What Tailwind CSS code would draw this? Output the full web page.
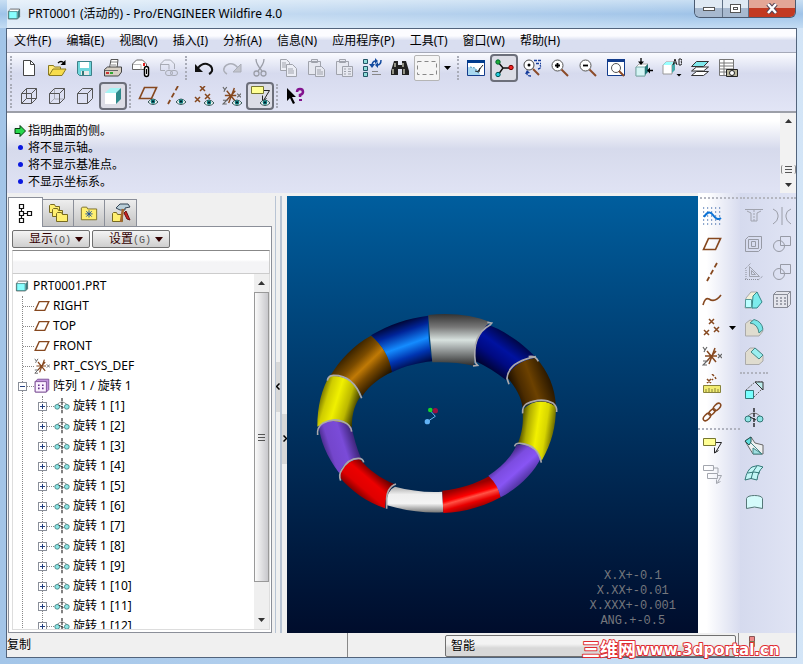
<!DOCTYPE html>
<html lang="zh-CN">
<head>
<meta charset="utf-8">
<title>PRT0001 (活动的) - Pro/ENGINEER Wildfire 4.0</title>
<script src="https://cdn.jsdelivr.net/npm/@tailwindcss/browser@4"></script>
</head>
<body class="flex h-screen flex-col overflow-hidden bg-linear-to-r from-[#a3c5e8] via-[#b9d4f0] to-[#d3e5f7] font-['Noto_Sans','Noto_Sans_CJK_SC',sans-serif] text-xs text-black">

<svg class="hidden" aria-hidden="true">
  <defs>
    <symbol id="cube" viewBox="0 0 20 20"><path d="M2 6 5 3H18V14L15 17H2z" fill="#fff" stroke="#333"/><path d="M2.500 6.500h12v10h-12z" fill="#8ff" stroke="#377"/><path d="M15 6.500 18 3.500V14l-3 3z" fill="#387c80"/></symbol>
    <symbol id="new" viewBox="0 0 20 20"><path d="M4.500 2.500h7l4 4v11h-11z" fill="#fff" stroke="#444"/><path d="M11.500 2.500v4h4" fill="none" stroke="#444"/></symbol>
    <symbol id="open" viewBox="0 0 20 20"><path d="M1.500 17V7.500h5l1 1.500h6v3" fill="#ffe97a" stroke="#8a7a20"/><path d="M2 17.500 6 11h13l-4 6.500z" fill="#f7dc4c" stroke="#8a7a20"/><path d="M11 5q3-3 6 0" fill="none" stroke="#000" stroke-width="1.300"/><path d="M18.500 2v5h-5z"/></symbol>
    <symbol id="save" viewBox="0 0 20 20"><path d="M2.500 3.500h14v14h-12l-2-2z" fill="#6fd6dc" stroke="#3c8088"/><path d="M5 4h9v6H5z" fill="#fff"/><path d="M6 13h8v4H6z" fill="#e8e8e8"/><path d="M7 13h2v4H7z" fill="#377"/></symbol>
    <symbol id="print" viewBox="0 0 20 20"><path d="M6.500 10 8 1.500h7L14 10" fill="#fff" stroke="#555"/><path d="M8 4h6M8 7h5" stroke="#888"/><path d="M1.500 11.500l3-2.500h14v5l-3 4h-14z" fill="#d8d0c4" stroke="#444"/><path d="M2 12.500h13" stroke="#666"/><path d="M3 14h3v2H3z" fill="#c33"/><path d="M7 14h3v2H7z" fill="#3a3"/></symbol>
    <symbol id="mail" viewBox="0 0 20 20"><path d="M1.500 11.500V6l4-4h6l4 4v5.500z" fill="#fff" stroke="#666"/><path d="M2 6.500h8v5" fill="none" stroke="#bbb"/><path d="M12 5h2v3h-2z" fill="#d22"/><path d="M13.500 10.500q0-2 2-2t2 2v6q0 2-2 2t-2-2z" fill="#fff" stroke="#000" stroke-width="1.500"/><path d="M15.500 11v5" stroke="#000"/></symbol>
    <symbol id="link" viewBox="0 0 20 20"><g fill="none" stroke="#a8abb5"><path d="M6 12.500H1.500V6l4-4h6l4 4v5"/><path d="M2 6.500h8v5"/><rect x="6.500" y="12.500" width="7" height="5" rx="2.500"/><rect x="11.500" y="12.500" width="7" height="5" rx="2.500"/></g></symbol>
    <symbol id="undo" viewBox="0 0 20 20"><path d="M4 10q4-5 9-4 6 2 5 7-1 2-3 3" fill="none" stroke="#111" stroke-width="2"/><path d="M1 6v8h8z" fill="#111"/></symbol>
    <symbol id="redo" viewBox="0 0 20 20"><path d="M16 10Q12 5 7 6q-6 2-5 7 1 2 3 3" fill="none" stroke="#abaeb8" stroke-width="1.500"/><path d="M19 6v8h-8z" fill="#c2c4cc" stroke="#abaeb8"/></symbol>
    <symbol id="cut" viewBox="0 0 20 20"><g fill="none" stroke="#9b9ea8" stroke-width="1.300"><path d="M6 1q0 5 6 12M14 1q0 5-6 12"/><circle cx="6.500" cy="15.500" r="2.500"/><circle cx="13.500" cy="15.500" r="2.500"/></g></symbol>
    <symbol id="copy" viewBox="0 0 20 20"><g fill="#eceef6" stroke="#a0a3ac"><path d="M2.500 1.500h6l3 3v8h-9z"/><path d="M8.500 6.500h6l4 4v8h-10z"/><path d="M4 5h4M4 7h4M4 9h4M10 11h5M10 13h6M10 15h6"/></g></symbol>
    <symbol id="paste" viewBox="0 0 20 20"><g fill="#e6e8f0" stroke="#a0a3ac"><path d="M2.500 3.500h12v13h-12zM5.500 1.500h6v3h-6z"/><path d="M9.500 8.500h6l3 3v7h-9zM11 12h4M11 14h6M11 16h6"/></g></symbol>
    <symbol id="pastes" viewBox="0 0 20 20"><g fill="#e6e8f0" stroke="#a0a3ac"><path d="M2.500 3.500h12v13h-12zM5.500 1.500h6v3h-6z"/><path d="M8.500 8.500h10v10h-10zM10 11h2M14 11h3M10 13.500h2M14 13.500h3M10 16h2M14 16h3"/></g></symbol>
    <symbol id="regen" viewBox="0 0 20 20"><g fill="#8fdcd8" stroke="#256"><path d="M1.500 1.500h4v4h-4zM1.500 8.500h4v4h-4zM1.500 14.500h4v4h-4z"/></g><path d="M10 13.500h6M10 16.500h9" stroke="#888"/><path d="M10 8q0-5 4-5M19 2q0 5-4 5" fill="none" stroke="#124a9e" stroke-width="1.500"/><path d="m13 0 3 3-3 3zM16 4l-3 3 3 3zM7 6l3 4 3-4z" fill="#124a9e"/></symbol>
    <symbol id="find" viewBox="0 0 20 20"><path d="M4 3h4v4h4V3h4l3 10v4h-7v-6H8v6H1v-4z" fill="#222"/><path d="M5 5v4M13 5v4M3 11v5M14 11v5" stroke="#b9b9a8" stroke-width="1.500"/></symbol>
    <symbol id="box" viewBox="0 0 22 20"><path d="M1.500 3.500h19v13h-19z" fill="none" stroke="#888" stroke-dasharray="4 3"/></symbol>
    <symbol id="redraw" viewBox="0 0 20 20"><path d="M1.500 2.500h17v15h-17z" fill="#fff" stroke="#123c8c"/><path d="M1 2h18v3H1z" fill="#003b8e"/><path d="M2 17V9l6 1 5 3 1 4z" fill="#a8d8f0"/><path d="m4 9 5 1 4 6" fill="none" stroke="#4a9ac0" stroke-dasharray="2 1"/><path d="m9 13 4 1 1-4M12 13l5-6" fill="none" stroke="#222"/></symbol>
    <symbol id="spin" viewBox="0 0 20 20"><path d="m4 4 5 6h9M9 10l-5 7" fill="none" stroke="#111" stroke-width="1.400"/><circle cx="4" cy="4" r="2.200" fill="#1fae35" stroke="#063"/><circle cx="17" cy="9.500" r="2.200" fill="#e22" stroke="#700"/><circle cx="4" cy="16.500" r="2.200" fill="#2cd" stroke="#055"/></symbol>
    <symbol id="orient" viewBox="0 0 20 20"><circle cx="7" cy="7" r="5" fill="#fff" stroke="#444"/><circle cx="7" cy="7" r="1.500"/><path d="m11 11 6 6" stroke="#8b4a28" stroke-width="2"/><path d="M12 2.500h7M14 5.500h5M5 14q-1 4 4 4M16 11q4-1 2-4" fill="none" stroke="#12399a" stroke-width="1.300" stroke-dasharray="3 1"/><path d="m3 16 2-4 3 3z" fill="#12399a"/></symbol>
    <symbol id="zin" viewBox="0 0 20 20"><circle cx="7.500" cy="7.500" r="5.500" fill="#fff" stroke="#555"/><path d="M5 7.500h5M7.500 5v5" stroke="#000" stroke-width="1.800"/><path d="m11.500 11.500 6.500 6.500" stroke="#8b4a28" stroke-width="2"/></symbol>
    <symbol id="zout" viewBox="0 0 20 20"><circle cx="7.500" cy="7.500" r="5.500" fill="#fff" stroke="#555"/><path d="M5 7.500h5" stroke="#000" stroke-width="1.800"/><path d="m11.500 11.500 6.500 6.500" stroke="#8b4a28" stroke-width="2"/></symbol>
    <symbol id="refit" viewBox="0 0 20 20"><path d="M1.500 1.500h17v16h-17z" fill="#fff" stroke="#123c8c"/><path d="M1 1h18v3H1z" fill="#123c8c"/><circle cx="10" cy="10" r="4.500" fill="#fff" stroke="#555"/><path d="m13 13 5 5" stroke="#8b4a28" stroke-width="2"/></symbol>
    <symbol id="reor" viewBox="0 0 20 20"><path d="m2 9 3-3h9l-3 3v9H2z" fill="#fff" stroke="#aaa"/><path d="M2 9h9v9H2z" fill="#d5f4f4" stroke="#7aa"/><path d="m11 9 3-3v8l-3 3z" fill="#277"/><path d="M7 0v4M19 12.500h-4" stroke="#000" stroke-width="1.300"/><path d="M4 3.500h6L7 7zM16 9.500v6l-3-3z"/></symbol>
    <symbol id="views" viewBox="0 0 20 20"><path d="m1 7 3-3h8l-2 3v9H1z" fill="#fff" stroke="#999"/><path d="m1 7 3-3h8L9 7z" fill="#9ff"/><path d="m10 7 3-3v8l-3 3z" fill="#4aa"/><path d="m11 7 2-6 2 6M12 5h2M17 7V1h2q2 1 0 3 2 1 0 3z" fill="none" stroke="#222"/><path d="M14.500 16h5L17 18.500z"/></symbol>
    <symbol id="layers" viewBox="0 0 20 20"><g fill="#fff" stroke="#333"><path d="m1.500 17.500 5-4h12l-5 4z"/><path d="m1.500 13 5-4h12l-5 4z"/><path d="m1.500 8.500 5-5h12l-5 5z" fill="#7fe8ec"/></g></symbol>
    <symbol id="vmgr" viewBox="0 0 20 20"><path d="M1.500 1.500h14v16h-14zM1 5h14M1 8h14M1 11h14M1 14h14M6 2v15" fill="#fff" stroke="#777"/><path d="M8.500 11.500h11v7h-11z" fill="#b9b69c" stroke="#222"/><circle cx="14" cy="15" r="2.500" fill="#fff" stroke="#222"/></symbol>
    <symbol id="w1" viewBox="0 0 20 20"><path d="M2.500 7.500h10v10h-10zM7.500 2.500h10v10h-10zM2.500 7.500l5-5M12.500 7.500l5-5M2.500 17.500l5-5M12.500 17.500l5-5" fill="none" stroke="#555"/></symbol>
    <symbol id="w2" viewBox="0 0 20 20"><path d="M7.500 3v10h10M2.500 17.500l5-5" fill="none" stroke="#a6a9b4"/><path d="M2.500 7.500h10v10h-10zl5-5h10v10l-5 5M12.500 7.500l5-5" fill="none" stroke="#555"/></symbol>
    <symbol id="w3" viewBox="0 0 20 20"><path d="M2.500 7.500h10v10h-10zl5-5h10v10l-5 5M12.500 7.500l5-5" fill="none" stroke="#555"/></symbol>
    <symbol id="w4" viewBox="0 0 20 20"><path d="m2 7 5-5h11l-5 5z" fill="#a5f4f4"/><path d="m13 7 5-5v11l-5 5z" fill="#2d8a8a"/><path d="M2 7h11v11H2z" fill="#fff"/></symbol>
    <symbol id="eye" viewBox="0 0 10 7"><path d="M0 4q5-6 10 0-5 5-10 0z" fill="#fff" stroke="#355"/><circle cx="5" cy="3.500" r="2.300" fill="#0b7d7d"/><circle cx="5" cy="3.500" r="1" fill="#012"/></symbol>
    <symbol id="plane" viewBox="0 0 20 20"><path d="M1.500 15.500 6.500 4.500h12l-5 11z" fill="none" stroke="#86481f" stroke-width="1.700"/></symbol>
    <symbol id="axis" viewBox="0 0 20 20"><path d="M15 1 5 19" fill="none" stroke="#86481f" stroke-width="1.800" stroke-dasharray="5 3"/></symbol>
    <symbol id="pts" viewBox="0 0 20 20"><path d="m7 1 5 5m0-5L7 6M2 12l5 5m0-5-5 5M12 9l5 5m0-5-5 5" stroke="#86481f" stroke-width="1.500"/></symbol>
    <symbol id="csys" viewBox="0 0 20 20"><path d="M3 10h12M5 5l9 11M13 2 7 18M5 15l9-10" stroke="#86481f" stroke-width="1.500"/><path d="m1 1 2 3 2-3M3 4 2 6M16 8l4 4m0-4-4 4M1 15h4l-4 4h4" fill="none" stroke="#666" stroke-width="1.200"/></symbol>
    <symbol id="planeE" viewBox="0 0 20 20"><use href="#plane" y="-3" width="20" height="20"/><use href="#eye" x="10" y="12" width="10" height="7"/></symbol>
    <symbol id="axisE" viewBox="0 0 20 20"><use href="#axis" x="-3" y="-1" width="20" height="20"/><use href="#eye" x="10" y="12" width="10" height="7"/></symbol>
    <symbol id="ptsE" viewBox="0 0 20 20"><use href="#pts" x="-1" y="-1" width="20" height="20"/><use href="#eye" x="10" y="13" width="10" height="7"/></symbol>
    <symbol id="csysE" viewBox="0 0 20 20"><use href="#csys" width="19" height="19"/><use href="#eye" x="10" y="13" width="10" height="7"/></symbol>
    <symbol id="anno" viewBox="0 0 20 20"><path d="M1.500 2.500h12v7h-12z" fill="#ffff94" stroke="#777730"/><path d="M14 6.500h5.500l-6 10m-1-5v5.500l4-2.500" fill="none" stroke="#222"/></symbol>
    <symbol id="annoE" viewBox="0 0 20 20"><use href="#anno" y="-2" width="20" height="20"/><use href="#eye" x="10" y="13" width="10" height="7"/></symbol>
    <symbol id="help" viewBox="0 0 20 20"><path d="M2 2v13l3-3 3 6 2-1-3-6h4z"/><path d="M12 6q0-3 3-3t3 3q0 2-3 3v2" fill="none" stroke="#82138e" stroke-width="2.500"/><path d="M14 13h3v2h-3z" fill="#82138e"/></symbol>
    <symbol id="sketch" viewBox="0 0 20 20"><g stroke="#1d4f9c" stroke-width="1.200" stroke-dasharray="1.200 2.800"><path d="M1 2h18M1 6h18M1 10h18M1 14h18M1 18h18"/></g><path d="M2 11q5-8 9-2 4 6 8 3" fill="none" stroke="#0a72d6" stroke-width="2"/></symbol>
    <symbol id="curve" viewBox="0 0 20 20"><path d="M1 15q2-8 6-6 6 4 12-4" fill="none" stroke="#86481f" stroke-width="1.600"/></symbol>
    <symbol id="ruler" viewBox="0 0 20 20"><path d="m5 5 4 4m0-4L5 9M10 0l2 2M13 3l1 2M10 5l1 1" stroke="#86481f" stroke-width="1.500"/><path d="M1.500 11.500h17v7h-17z" fill="#f2ed72" stroke="#88843a"/><path d="M4 18v-3M7 18v-4M10 18v-3M13 18v-4M16 18v-3" stroke="#88843a"/></symbol>
    <symbol id="chain" viewBox="0 0 20 20"><g fill="none" stroke="#86481f" stroke-width="1.500"><ellipse cx="5" cy="15" rx="4.500" ry="2.600" transform="rotate(-45 5 15)"/><ellipse cx="10" cy="10" rx="4" ry="2" transform="rotate(-45 10 10)"/><ellipse cx="15" cy="5" rx="4.500" ry="2.600" transform="rotate(-45 15 5)"/></g></symbol>
    <symbol id="anno2" viewBox="0 0 20 20"><path d="M1.500 1.500h10v5h-10zM5.500 9.500h10v5h-10zM12 4h4v5M16 11.500h3.500l-4 7m-1-3v4l4-2" fill="none" stroke="#a3a6ae"/></symbol>
    <symbol id="hole" viewBox="0 0 20 20"><path d="M1 3.500h18M3 5l4 2v8h6V7l4-2" fill="none" stroke="#a0a3ae"/><path d="M10 4v12" stroke="#a0a3ae" stroke-dasharray="2 1"/></symbol>
    <symbol id="shell" viewBox="0 0 20 20"><path d="M1.500 5.500l3-3h13v12l-3 3h-13zM4.500 5.500h10v9h-10zM7.500 7.500h4v5h-4z" fill="none" stroke="#979aa5"/></symbol>
    <symbol id="rib" viewBox="0 0 20 20"><path d="M5.500 4.500v10h10zM7.500 8.500v4h4z" fill="none" stroke="#a0a3ae"/><path d="M1 17.500h13M2 8v9M1 7l6-6M14 18l5-4" stroke="#8b8e99" stroke-dasharray="1 1"/></symbol>
    <symbol id="draft" viewBox="0 0 20 20"><path d="M2 8 7 2h6L9 18H1z" fill="#f2f0d8" stroke="#aaa"/><path d="m9 6 4-4 5 10-5 6H8z" fill="#7cecec" stroke="#388"/><path d="M1.500 9.500h6v8h-6z" fill="#bff" stroke="#599"/></symbol>
    <symbol id="round" viewBox="0 0 20 20"><path d="M1.500 5.500 6 2q11 2 13 11l-4 5H1.500z" fill="#dfdccf" stroke="#aaa"/><path d="m6 5 4-3.500q8 2 9 10L15 15Q14 6 6 5z" fill="#78e6e8" stroke="#488"/></symbol>
    <symbol id="chamf" viewBox="0 0 20 20"><path d="M1.500 6.500 6 2h5l8 7v6l-4 3.500H1.500z" fill="#dfdccf" stroke="#aaa"/><path d="m7 6 4-4 8 7-4 4z" fill="#9aeff0" stroke="#488"/></symbol>
    <symbol id="extr" viewBox="0 0 20 20"><path d="m2 10 9-8h7v7l-8 8" fill="none" stroke="#666" stroke-dasharray="2 1"/><path d="m11 2h8v8z" fill="#bcecec" stroke="#333"/><path d="M1.500 10.500h8v8h-8z" fill="#7ff" stroke="#377"/></symbol>
    <symbol id="rev" viewBox="0 0 20 20"><path d="M4 8q6-6 12 0" fill="none" stroke="#777"/><circle cx="4" cy="11" r="3" fill="#8ee4e4" stroke="#377"/><circle cx="16" cy="11" r="3" fill="#8ee4e4" stroke="#377"/><path d="M10 0v20" stroke="#111" stroke-width="1.300" stroke-dasharray="4 1"/><path d="m6 9 6 3" stroke="#222"/></symbol>
    <symbol id="blend" viewBox="0 0 20 20"><path d="m1 5 6-4 4 6 8 2v9H9z" fill="#eef0f0" stroke="#666"/><path d="m1 5 6-4v5L5 9z" fill="#62dddd" stroke="#255"/><path d="M9 18v-6l9 6z" fill="#9fdfe0" stroke="#488"/><path d="m7 7 11 11" stroke="#488"/></symbol>
    <symbol id="bound" viewBox="0 0 20 20"><path d="M1 16q2-10 7-13 6-3 11 0-5 4-6 13-6-3-12 0z" fill="#c2f6f6" stroke="#377"/><path d="M4 9q6-2 12 0M7 15q1-8 6-13" fill="none" stroke="#377"/></symbol>
    <symbol id="fill" viewBox="0 0 20 20"><path d="M2.500 16.500v-10q1-3 8-3t8 3v10q-8-3-16 0z" fill="#d4fbfb" stroke="#577"/></symbol>
    <symbol id="mirror" viewBox="0 0 20 20"><path d="M1 3q5 2 5 6v2q0 4-5 7M10 1v18M19 3q-5 2-5 6v2q0 4 5 7" fill="none" stroke="#9b9ea8"/></symbol>
    <symbol id="merge" viewBox="0 0 20 20"><circle cx="7" cy="12" r="5.500" fill="none" stroke="#979aa5"/><path d="M8.500 2.500h10v9h-10z" fill="none" stroke="#979aa5"/></symbol>
    <symbol id="patt" viewBox="0 0 20 20"><path d="M1.500 4.500l3-3h14v13l-3 3h-14zh14v13m0-13 3-3" fill="#e4e5ec" stroke="#888b96"/><path d="M4 8h10M4 11h10M4 14h10" stroke="#888b96" stroke-width="1.500" stroke-dasharray="2 2"/></symbol>
    <symbol id="pattp" viewBox="0 0 20 20"><path d="M1.500 4.500l3-3h14v13l-3 3h-14z" fill="#c193dc" stroke="#70408c"/><path d="M1.500 4.500h14v13h-14z" fill="#fbf0ff" stroke="#70408c"/><path d="M5 9h8M5 13h8" stroke="#63308a" stroke-width="2" stroke-dasharray="2 3"/></symbol>
    <symbol id="tree" viewBox="0 0 20 20"><path d="M3.500 1.500h4v4h-4zM3.500 8.500h4v4h-4zM11.500 8.500h4v4h-4zM3.500 15.500h4v4h-4zM5.500 6v2M5.500 13v2M8 10.500h3" fill="none" stroke="#111" stroke-width="1.200"/></symbol>
    <symbol id="folders" viewBox="0 0 20 20"><g fill="#ffef70" stroke="#776a20"><path d="M1.500 9.500v-7l1-1h4l1 2h4v6z"/><path d="M4.500 13.500v-7l1-1h4l1 2h4v6z"/><path d="M8.500 18.500v-8l1-1h4l1 2h5v7z"/></g></symbol>
    <symbol id="fav" viewBox="0 0 20 20"><path d="M1.500 17.500v-13l1-1h5l1 2h10v12z" fill="#ffef70" stroke="#776a20"/><path d="M10 7v8M6 11h8M7 8l6 6M13 8l-6 6" stroke="#114a9e"/></symbol>
    <symbol id="conn" viewBox="0 0 20 20"><path d="M1.500 18.500v-8l1-1h3l1 2h5v7z" fill="#ffef70" stroke="#776a20"/><path d="m5 5 4-4h8l2 3-5 1v2H9z" fill="#b9ced8" stroke="#345"/><path d="m12 6-2 13" stroke="#a5662e" stroke-width="2.500"/><path d="m15 8 4 9-3-1-3-6z" fill="#c22" stroke="#611"/></symbol>
  </defs>
</svg>

<header class="flex h-7 shrink-0 items-start bg-linear-to-b from-[#c9dff3] via-[#9fc3e8] to-[#c3dcf3] px-[7px]">
  <div class="flex h-7 flex-1 items-center gap-[7px] bg-linear-to-r from-white/60 to-transparent">
    <svg class="size-[14px]"><use href="#cube"/></svg>
    <h1>PRT0001 (活动的) - Pro/ENGINEER Wildfire 4.0</h1>
  </div>
  <div class="flex h-[18px] overflow-hidden rounded-b-md border border-t-0 border-[#4a5a70]">
    <button aria-label="最小化" class="flex w-7 items-center justify-center border-r border-[#5f7085] bg-linear-to-b from-[#dfe9f3] from-50% to-[#a7b9cf] to-50%"><span class="h-1 w-3 border border-[#555] bg-white"></span></button>
    <button aria-label="最大化" class="flex w-[26px] items-center justify-center border-r border-[#5f7085] bg-linear-to-b from-[#dfe9f3] from-50% to-[#a7b9cf] to-50%"><span class="flex h-[9px] w-[11px] items-center justify-center border border-[#555] bg-white"><span class="h-[3px] w-[5px] border border-[#555]"></span></span></button>
    <button aria-label="关闭" class="flex w-[46px] items-center justify-center bg-linear-to-b from-[#e3a696] from-50% to-[#c23a22] to-50%"><svg class="h-[11px] w-3" viewBox="0 0 12 11"><path d="m2 1 8 9M10 1 2 10" stroke="#545" stroke-width="4.500"/><path d="m2 1 8 9M10 1 2 10" stroke="#fff" stroke-width="2.500"/></svg></button>
  </div>
</header>

<div class="mx-[6px] mb-[6px] flex min-h-0 flex-1 flex-col border border-[#52647c] bg-[#f0f0f0]">
  <nav class="flex h-6 shrink-0 items-center gap-[15px] border-b border-[#a5a9b8] bg-linear-to-b from-[#fcfcff] from-30% to-[#d9def0] to-50% px-[7px]">
    <button>文件(F)</button><button>编辑(E)</button><button>视图(V)</button><button>插入(I)</button><button>分析(A)</button><button>信息(N)</button><button>应用程序(P)</button><button>工具(T)</button><button>窗口(W)</button><button>帮助(H)</button>
  </nav>

  <div class="shrink-0 border-b-2 border-[#9c9fa8] bg-linear-to-b from-[#fafbff] via-[#d6daee] via-35% to-[#e2e5f6] pt-px pb-px">
    <div id="bar1" class="flex h-7 items-center pl-px" role="toolbar" aria-label="文件与视图"></div>
    <div id="bar2" class="flex h-7 items-center pl-px" role="toolbar" aria-label="显示"></div>
  </div>

  <section class="flex h-20 shrink-0 bg-linear-to-b from-white from-10% via-[#d6daec] via-45% to-[#e0e3f4]" aria-label="消息">
    <ul class="flex-1 pt-[9px] pl-[7px] leading-[17px]">
      <li class="flex items-center gap-[2px]"><svg class="size-3" viewBox="0 0 12 12"><path d="M1 3.500h5v-3l5.500 5.500L6 11.500v-3H1z" fill="#27d84c" stroke="#063a10"/></svg>指明曲面的侧。</li>
      <li class="flex items-center"><span class="mr-[5px] ml-1 size-[5px] rounded-full bg-[#0a18e0]"></span>将不显示轴。</li>
      <li class="flex items-center"><span class="mr-[5px] ml-1 size-[5px] rounded-full bg-[#0a18e0]"></span>将不显示基准点。</li>
      <li class="flex items-center"><span class="mr-[5px] ml-1 size-[5px] rounded-full bg-[#0a18e0]"></span>不显示坐标系。</li>
    </ul>
    <div class="flex w-4 flex-col items-center justify-between bg-[#f2f2f2] py-[6px]">
      <svg class="h-1 w-[7px]" viewBox="0 0 7 4"><path d="M0 4 3.500 0 7 4z" fill="#333"/></svg>
      <div class="flex flex-1 flex-col justify-end pb-[9px]"><span class="flex h-[9px] w-[15px] flex-col justify-between rounded-xs border-x border-[#888] px-[3px] py-px"><i class="h-px bg-[#555]"></i><i class="h-px bg-[#555]"></i><i class="h-px bg-[#555]"></i></span></div>
      <svg class="h-1 w-[7px]" viewBox="0 0 7 4"><path d="M0 0 3.500 4 7 0z" fill="#333"/></svg>
    </div>
  </section>

  <main class="flex min-h-0 flex-1">
    <aside class="flex w-[265px] shrink-0 flex-col pt-1 pl-px">
      <div class="flex h-[29px] items-end" role="tablist">
        <button role="tab" aria-label="模型树" class="z-10 flex h-[30px] w-[35px] items-center justify-center self-start border border-b-0 border-[#8b8f99] bg-white"><svg class="size-5"><use href="#tree"/></svg></button>
        <button role="tab" aria-label="文件夹浏览器" class="flex h-[27px] w-[31px] items-center justify-center border border-b-0 border-l-0 border-[#8b8f99] bg-linear-to-b from-[#eee] to-[#c4c4c4]"><svg class="size-5"><use href="#folders"/></svg></button>
        <button role="tab" aria-label="收藏夹" class="flex h-[27px] w-[31px] items-center justify-center border border-b-0 border-l-0 border-[#8b8f99] bg-linear-to-b from-[#eee] to-[#c4c4c4]"><svg class="size-[18px]"><use href="#fav"/></svg></button>
        <button role="tab" aria-label="连接" class="flex h-[27px] w-8 items-center justify-center border border-b-0 border-l-0 border-[#8b8f99] bg-linear-to-b from-[#eee] to-[#c4c4c4]"><svg class="size-5"><use href="#conn"/></svg></button>
      </div>
      <div class="flex min-h-0 flex-1 flex-col border border-[#8b8f99] bg-white pt-[3px] pr-px pb-[2px] pl-[3px]">
        <div class="flex gap-[2px]">
          <button class="flex h-[18px] w-[78px] items-center justify-end gap-1 rounded-xs border border-[#707070] bg-linear-to-b from-[#f4f4f4] to-[#cfcfcf] pr-[6px] text-[#300]"><span>显示<span class="font-['Liberation_Mono',monospace] text-[10px] text-[#555]">(O)</span></span><svg class="h-[5px] w-2" viewBox="0 0 8 5"><path d="M0 0h8L4 5z" fill="#300"/></svg></button>
          <button class="flex h-[18px] w-[78px] items-center justify-end gap-1 rounded-xs border border-[#707070] bg-linear-to-b from-[#f4f4f4] to-[#cfcfcf] pr-[6px] text-[#300]"><span>设置<span class="font-['Liberation_Mono',monospace] text-[10px] text-[#555]">(G)</span></span><svg class="h-[5px] w-2" viewBox="0 0 8 5"><path d="M0 0h8L4 5z" fill="#300"/></svg></button>
        </div>
        <div class="mt-[2px] h-6 shrink-0 border border-t-[#888] border-r-[#ccc] border-b-[#ccc] border-l-[#ddd] bg-linear-to-b from-white from-40% to-[#f4f4f6] to-50%"></div>
        <div class="flex min-h-0 flex-1 overflow-hidden border border-t-0 border-[#ddd]">
          <div class="min-w-0 flex-1 pt-[2px] pl-[2px] leading-5">
            <div class="flex h-5 items-center gap-[4px]"><svg class="size-[14px]"><use href="#cube"/></svg>PRT0001.PRT</div>
            <ul class="ml-[7px] border-l border-dotted border-[#888]">
              <li class="flex h-5 items-center"><i class="w-[11px] border-t border-dotted border-[#888]"></i><svg class="mr-[3px] size-4"><use href="#plane"/></svg>RIGHT</li>
              <li class="flex h-5 items-center"><i class="w-[11px] border-t border-dotted border-[#888]"></i><svg class="mr-[3px] size-4"><use href="#plane"/></svg>TOP</li>
              <li class="flex h-5 items-center"><i class="w-[11px] border-t border-dotted border-[#888]"></i><svg class="mr-[3px] size-4"><use href="#plane"/></svg>FRONT</li>
              <li class="flex h-5 items-center"><i class="w-[11px] border-t border-dotted border-[#888]"></i><svg class="mr-[3px] size-4"><use href="#csys"/></svg>PRT_CSYS_DEF</li>
              <li>
                <div class="flex h-5 items-center"><button aria-label="折叠" class="-ml-[5px] flex size-[9px] items-center justify-center border border-[#8a8f99] bg-white"><span class="h-px w-[5px] bg-[#234080]"></span></button><i class="w-[7px] border-t border-dotted border-[#888]"></i><svg class="mr-[3px] size-4"><use href="#pattp"/></svg>阵列 1 / 旋转 1</div>
                <ul id="features" class="ml-[19px] border-l border-dotted border-[#888]"></ul>
              </li>
            </ul>
          </div>
          <div class="flex w-[15px] flex-col items-center bg-[#efefef]">
            <svg class="mt-[7px] mb-[7px] h-1 w-[7px] shrink-0" viewBox="0 0 7 4"><path d="M0 4 3.500 0 7 4z" fill="#333"/></svg>
            <div class="flex min-h-0 w-full flex-1 flex-col">
              <div class="flex h-[91%] flex-col items-center justify-center gap-[2px] border border-[#999] bg-linear-to-r from-[#fafafa] to-[#c8c8cc]"><i class="h-px w-[7px] bg-[#555]"></i><i class="h-px w-[7px] bg-[#555]"></i><i class="h-px w-[7px] bg-[#555]"></i></div>
            </div>
            <svg class="mt-[7px] mb-[7px] h-1 w-[7px] shrink-0" viewBox="0 0 7 4"><path d="M0 0 3.500 4 7 0z" fill="#333"/></svg>
          </div>
        </div>
      </div>
    </aside>

    <div class="ml-[3px] flex w-3 shrink-0 pt-[3px]">
      <div class="flex w-[6px] flex-col border-x border-[#b8c4d4]">
        <div class="flex-6"></div>
        <button aria-label="收起导航器" class="flex h-[50px] items-center justify-center bg-[#d8d8d8]"><svg class="h-[7px] w-1" viewBox="0 0 4 7"><path d="M3.500.5.500 3.500l3 3" fill="none" stroke="#000" stroke-width="1.500"/></svg></button>
        <div class="flex-8"></div>
      </div>
      <div class="flex w-[6px] flex-col border-l border-[#b8c4d4]">
        <div class="flex-9"></div>
        <button aria-label="展开浏览器" class="flex h-[50px] items-center justify-center bg-[#d8d8d8]"><svg class="h-[7px] w-1" viewBox="0 0 4 7"><path d="m.5.500 3 3-3 3" fill="none" stroke="#000" stroke-width="1.500"/></svg></button>
        <div class="flex-7"></div>
      </div>
    </div>

    <div class="flex min-w-0 flex-1 flex-col pt-[3px]">
    <section class="relative min-h-0 flex-1 bg-linear-to-b from-[#005e9e] to-[#000d2c]" aria-label="图形窗口">
      <svg class="size-full" viewBox="0 0 411 437" role="img" aria-label="圆环模型">
        <defs>
          <linearGradient id="gg" x1="0" y1="0" x2="0" y2="1"><stop offset="0" stop-color="#333"/><stop offset=".25" stop-color="#777"/><stop offset=".5" stop-color="#d8e2df"/><stop offset=".65" stop-color="#a5abab"/><stop offset="1" stop-color="#2b2b2b"/></linearGradient>
          <linearGradient id="gbl" gradientUnits="userSpaceOnUse" x1="325" y1="100" x2="372" y2="232"><stop offset="0" stop-color="#00083c"/><stop offset=".2" stop-color="#002498"/><stop offset=".5" stop-color="#148cff"/><stop offset=".75" stop-color="#0034b0"/><stop offset="1" stop-color="#00083c"/></linearGradient>
          <linearGradient id="gbr" gradientUnits="userSpaceOnUse" x1="680" y1="140" x2="600" y2="250"><stop offset="0" stop-color="#000434"/><stop offset=".4" stop-color="#0012a0"/><stop offset=".65" stop-color="#000a82"/><stop offset="1" stop-color="#000224"/></linearGradient>
          <linearGradient id="gol" gradientUnits="userSpaceOnUse" x1="170" y1="190" x2="262" y2="285"><stop offset="0" stop-color="#352000"/><stop offset=".3" stop-color="#7a4b00"/><stop offset=".5" stop-color="#c07a06"/><stop offset=".7" stop-color="#774800"/><stop offset="1" stop-color="#211300"/></linearGradient>
          <linearGradient id="gor" gradientUnits="userSpaceOnUse" x1="780" y1="270" x2="670" y2="310"><stop offset="0" stop-color="#2a1800"/><stop offset=".45" stop-color="#6c4100"/><stop offset=".75" stop-color="#4c2c00"/><stop offset="1" stop-color="#1b0e00"/></linearGradient>
          <linearGradient id="gyl" gradientUnits="userSpaceOnUse" x1="88" y1="320" x2="200" y2="355"><stop offset="0" stop-color="#6a6800"/><stop offset=".2" stop-color="#cfcc00"/><stop offset=".45" stop-color="#f0f000"/><stop offset=".75" stop-color="#bcb800"/><stop offset="1" stop-color="#3b3a00"/></linearGradient>
          <linearGradient id="gyr" gradientUnits="userSpaceOnUse" x1="792" y1="420" x2="692" y2="405"><stop offset="0" stop-color="#6a6800"/><stop offset=".25" stop-color="#d8d600"/><stop offset=".5" stop-color="#f2f000"/><stop offset=".8" stop-color="#b0ac00"/><stop offset="1" stop-color="#4b4900"/></linearGradient>
          <linearGradient id="gpl" gradientUnits="userSpaceOnUse" x1="95" y1="485" x2="205" y2="450"><stop offset="0" stop-color="#35206e"/><stop offset=".25" stop-color="#7446cc"/><stop offset=".6" stop-color="#7a4bd8"/><stop offset="1" stop-color="#2d1b60"/></linearGradient>
          <linearGradient id="gpr" gradientUnits="userSpaceOnUse" x1="705" y1="580" x2="635" y2="500"><stop offset="0" stop-color="#452c90"/><stop offset=".4" stop-color="#8855f4"/><stop offset=".7" stop-color="#7c4ce0"/><stop offset="1" stop-color="#37216e"/></linearGradient>
          <linearGradient id="grl" gradientUnits="userSpaceOnUse" x1="200" y1="615" x2="260" y2="545"><stop offset="0" stop-color="#7a0000"/><stop offset=".3" stop-color="#e00000"/><stop offset=".65" stop-color="#ec0000"/><stop offset="1" stop-color="#6a0000"/></linearGradient>
          <linearGradient id="grr" gradientUnits="userSpaceOnUse" x1="555" y1="658" x2="535" y2="588"><stop offset="0" stop-color="#8a0000"/><stop offset=".3" stop-color="#e80000"/><stop offset=".53" stop-color="#ff5346"/><stop offset=".65" stop-color="#f00"/><stop offset="1" stop-color="#900"/></linearGradient>
          <linearGradient id="gw" x1="0" y1="0" x2="0" y2="1"><stop offset="0" stop-color="#aaa"/><stop offset=".3" stop-color="#eee"/><stop offset=".65" stop-color="#f4f4f4"/><stop offset="1" stop-color="#777"/></linearGradient>
        </defs>
        <g transform="translate(3 94) scale(.3333)">
          <path fill="url(#gw)" d="M460 667C400 670 345 662 288 645Q290 600 315 590C360 602 410 608 457 605z"/>
          <path fill="url(#grr)" d="M632 622C580 650 520 668 460 669L457 602C510 597 560 580 600 557Q625 585 632 622z"/>
          <path fill="url(#gpr)" d="M755 500C730 550 690 590 632 622Q625 585 595 557C635 530 665 500 680 465Q735 455 755 500z"/>
          <path fill="url(#grl)" d="M285 655C230 635 185 605 148 560Q160 515 208 505C235 540 270 565 315 583Q285 605 285 655z"/>
          <path fill="url(#gpl)" d="M148 550C110 500 90 450 86 405Q130 380 183 400C190 440 200 475 214 507Q160 510 148 550z"/>
          <path fill="url(#gyr)" d="M798 350C798 410 785 460 755 512Q745 470 684 460C695 430 702 400 697 360Q745 315 798 350z"/>
          <path fill="url(#gor)" d="M738 203C775 245 795 290 798 350Q745 315 698 355C695 320 675 290 652 262Q665 215 738 203z"/>
          <path fill="url(#gbr)" d="M590 103C640 120 700 160 738 203Q665 215 648 270C620 248 590 230 556 213Q548 150 590 103z"/>
          <path fill="url(#gyl)" d="M82 410C82 350 95 295 120 255Q180 250 215 315C195 340 185 370 186 412Q130 375 82 410z"/>
          <path fill="url(#gol)" d="M120 258C150 210 190 165 243 137Q295 180 307 246C270 262 240 285 217 318Q190 255 120 258z"/>
          <path fill="url(#gbl)" d="M243 136C300 103 350 85 415 77Q412 150 427 214C385 218 345 228 306 247Q295 180 243 136z"/>
          <path fill="url(#gg)" d="M415 75C480 67 550 75 600 96Q545 145 553 228C510 217 470 216 427 217Q420 150 415 75z"/>
          <g fill="none" stroke="#aaa8ac" stroke-width="5">
            <path d="M592 97l13 2-5 6Q545 135 556 218l7 8-14 2"/><path d="M716 200q20-4 29 14M738 200Q655 215 651 265l6 18"/><path d="M698 370Q696 350 710 341Q755 320 790 340q12 10 10 26"/><path d="M674 469q2-11 18-9Q745 465 754 518"/><path d="M112 272q2-15 18-16Q190 255 215 325"/><path d="M83 435Q80 412 98 400Q130 382 160 395q24 10 25 30"/><path d="M152 572Q145 555 155 540Q175 505 205 505q14 0 16 12"/><path d="M318 582q-30 10-28 56v18"/>
          </g>
          <path d="m420 361 16 18-24 16" fill="none" stroke="#6ab4ee" stroke-width="3"/><circle cx="421" cy="360" r="7" fill="#15d72c"/><circle cx="436" cy="362" r="8" fill="#9c1040"/><circle cx="412" cy="395" r="8" fill="#62b2f5"/>
        </g>
      </svg>
      <p class="absolute right-[22px] bottom-1 text-center font-['Liberation_Mono',monospace] text-xs leading-[15px] text-[#75777d]">X.X+-0.1<br>X.XX+-0.01<br>X.XXX+-0.001<br>ANG.+-0.5</p>
    </section>
    </div>

    <div class="flex w-[42px] shrink-0 flex-col bg-linear-to-r from-white from-20% to-[#d8dcef]">
      <i class="mx-[2px] mt-1 mb-[3px] border-t-2 border-dotted border-[#b4b6c0]"></i>
      <div id="col1" class="flex flex-col" role="toolbar" aria-label="基准"></div>
    </div>
    <div class="w-14 shrink-0 bg-linear-to-r from-[#d5daee] to-[#e0e4f4]">
      <i class="mt-1 mb-[3px] block border-t-2 border-dotted border-[#b4b6c0]"></i>
      <div class="flex">
        <div id="col2" class="flex w-7 flex-col" role="toolbar" aria-label="特征"></div>
        <div id="col3" class="flex w-7 flex-col" role="toolbar" aria-label="编辑特征"></div>
      </div>
    </div>
  </main>

  <footer class="relative flex h-6 shrink-0 items-stretch bg-[#f0f0f0]">
    <output class="flex w-[341px] shrink-0 items-center border-r border-[#888]">复制</output>
    <div class="flex flex-1 items-stretch pt-[2px] pl-[97px]">
      <select aria-label="选取过滤器" class="w-full appearance-none rounded-xs border border-[#707070] bg-linear-to-b from-[#f3f3f3] from-40% to-[#d8d8d8] to-60% pl-[5px]"><option>智能</option></select>
    </div>
    <div class="ml-[2px] flex w-[58px] items-start border-l border-[#888] pt-[3px] pl-[10px]"><svg class="h-[11px] w-[6px]" viewBox="0 0 6 11"><path d="M.5.500h5v5h-5z" fill="#e88" stroke="#855"/><path d="M.5 5.500h5v5h-5z" fill="#ee5" stroke="#775"/></svg></div>
    <svg class="absolute right-2 -bottom-[3px] h-5 w-[208px] overflow-visible" viewBox="0 0 208 20"><g fill="#fff" stroke="#df2a30" stroke-width="2" stroke-linejoin="round" paint-order="stroke"><text x="2" y="16" class="font-['Noto_Sans_CJK_SC',sans-serif] text-[18px] font-bold">三维网</text><text x="56" y="15" class="font-['DejaVu_Sans',sans-serif] text-[15px] font-bold">www.3dportal.cn</text></g></svg>
  </footer>
</div>

<script>
  const icon = (id, label) => `<button aria-label="${label}" class="flex size-7 shrink-0 items-center justify-center"><svg class="size-5"><use href="#${id}"/></svg></button>`;
  const pressed = (id, label) => `<button aria-label="${label}" aria-pressed="true" class="flex size-7 shrink-0 items-center justify-center rounded-sm border-2 border-[#6c6f7a] bg-[#dcdde6]"><svg class="size-5"><use href="#${id}"/></svg></button>`;
  const grip = () => '<i class="mx-[2px] h-6 w-[3px] shrink-0 border-l-2 border-dotted border-[#a9acb8]"></i>';
  const rule = () => '<i class="my-[2px] h-[2px] border-t-2 border-dotted border-[#b0b3bf]"></i>';
  const build = (host, items) => {
    document.getElementById(host).innerHTML = items.map(i =>
      i === '|' ? grip() : i === '-' ? rule() : i[0] === '<' ? i : i[2] ? pressed(i[0], i[1]) : icon(i[0], i[1])).join('');
  };
  build('bar1', ['|', ['new','新建'], ['open','打开'], ['save','保存'], ['print','打印'], ['mail','发送'], ['link','发送链接'], '|',
    ['undo','撤消'], ['redo','重做'], ['cut','剪切'], ['copy','复制'], ['paste','粘贴'], ['pastes','选择性粘贴'], ['regen','再生'], ['find','查找'],
    '<button aria-label="选取框" class="flex h-[26px] w-[26px] shrink-0 items-center justify-center rounded-xs border border-[#b5b5b5] bg-[#f5f5f5]"><svg class="h-5 w-[22px]"><use href="#box"/></svg></button>',
    '<button aria-label="选取选项" class="flex h-7 w-[15px] shrink-0 items-center justify-center"><svg class="h-1 w-[7px]" viewBox="0 0 7 4"><path d="M0 0h7L3.500 4z"/></svg></button>',
    '|', ['redraw','重画'], ['spin','旋转中心',1], ['orient','定向模式'], ['zin','放大'], ['zout','缩小'], ['refit','重新调整'], ['reor','重定向'], ['views','已命名视图'], ['layers','层'], ['vmgr','视图管理器']]);
  build('bar2', ['|', ['w1','线框'], ['w2','隐藏线'], ['w3','无隐藏线'], ['w4','着色',1], '|', ['planeE','基准平面开关'], ['axisE','基准轴开关'], ['ptsE','基准点开关'], ['csysE','坐标系开关'], ['annoE','注释开关',1], '|', ['help','帮助']]);
  build('col1', [['sketch','草绘'], ['plane','平面'], ['axis','轴'], ['curve','曲线'],
    '<div class="flex items-center justify-between pr-[4px]">' + icon('pts','点') + '<button aria-label="点选项"><svg class="h-1 w-[7px]" viewBox="0 0 7 4"><path d="M0 0h7L3.500 4z"/></svg></button></div>',
    ['csys','坐标系'], ['ruler','分析点'], ['chain','参照'], '-', ['anno','注释'], ['anno2','注释特征']]);
  build('col2', [['hole','孔'], ['shell','壳'], ['rib','筋'], ['draft','拔模'], ['round','倒圆角'], ['chamf','倒角'], '-', ['extr','拉伸'], ['rev','旋转'], ['blend','可变剖面扫描'], ['bound','边界混合'], ['fill','造型']]);
  build('col3', [['mirror','镜像'], ['merge','合并'], ['merge','修剪'], ['patt','阵列']]);
  document.getElementById('features').innerHTML = Array.from({ length: 12 }, (_, n) =>
    `<li class="flex h-5 items-center"><button aria-label="展开" class="relative -ml-[5px] flex size-[9px] items-center justify-center border border-[#8a8f99] bg-white"><svg class="size-[5px]" viewBox="0 0 5 5"><path d="M0 2.500h5M2.500 0v5" stroke="#234080"/></svg></button><i class="w-[7px] border-t border-dotted border-[#888]"></i><svg class="mr-[3px] size-4"><use href="#rev"/></svg>旋转 1 [${n + 1}]</li>`).join('');
</script>
</body>
</html>
